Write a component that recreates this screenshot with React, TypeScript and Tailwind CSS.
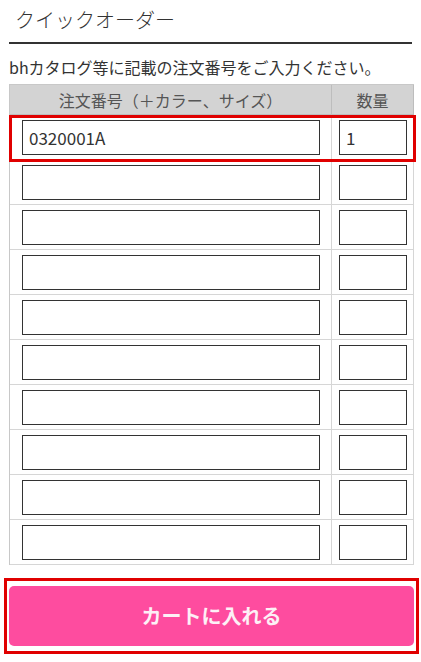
const ROWS = 10;

const App = () => {
  const font = { fontFamily: '"Noto Sans CJK JP", "Noto Sans", sans-serif' };
  return (
    <div className="w-[421px] h-[662px] bg-white text-[#333]" style={font}>
      <div className="mx-[9px]">
        <h2 className="pl-[6px] pt-[5px] pb-[7px] text-[20px] leading-[30px] font-light border-b-2 border-[#333]">
          クイックオーダー
        </h2>
        <p className="mt-[12px] text-[16px] leading-[22px] whitespace-nowrap">
          bhカタログ等に記載の注文番号をご入力ください。
        </p>
        <div className="relative mt-[6px] w-[405px] border-l border-t border-[#c8c8c8]">
          <div className="grid grid-cols-[322px_82px]">
            <div className="h-[30px] bg-[#d3d3d3] border-r border-b border-[#bdbdbd] flex items-center justify-center text-[16px] text-[#555]">
              注文番号（＋カラー、サイズ）
            </div>
            <div className="h-[30px] bg-[#d3d3d3] border-r border-b border-[#bdbdbd] flex items-center justify-center text-[16px] text-[#555]">
              数量
            </div>
            {Array.from({ length: ROWS }).map((_, i) => (
              <div key={i} className="contents">
                <div className="h-[45px] border-r border-b border-[#d6d6d6] pt-[5px] pl-[12px]">
                  <input
                    defaultValue={i === 0 ? "0320001A" : ""}
                    className="block h-[35px] w-[298px] border border-[#333] px-[6px] text-[17px] text-[#333] outline-none"
                    style={font}
                  />
                </div>
                <div className="h-[45px] border-r border-b border-[#d6d6d6] pt-[5px] pl-[7px]">
                  <input
                    defaultValue={i === 0 ? "1" : ""}
                    className="block h-[35px] w-[68px] border border-[#333] px-[6px] text-[17px] text-[#333] outline-none"
                    style={font}
                  />
                </div>
              </div>
            ))}
          </div>
          <div className="absolute left-[-1px] top-[30px] w-[407px] h-[47px] border-[3px] border-[#e00000] pointer-events-none" />
        </div>
      </div>
      <div className="mt-[13px] ml-[4px] w-[415px] border-[3px] border-[#e00000] px-[2px] py-[5px]">
        <button
          className="w-full h-[60px] rounded-[5px] bg-[#fe4c9f] text-[20px] font-bold text-[#fdf0f6]"
          style={font}
        >
          カートに入れる
        </button>
      </div>
    </div>
  );
};

export default App;
